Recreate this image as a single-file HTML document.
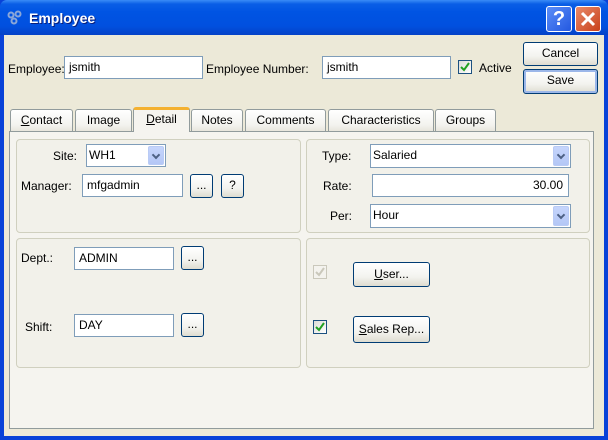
<!DOCTYPE html>
<html><head><style>
*{box-sizing:border-box;margin:0;padding:0}
body{width:608px;height:440px;overflow:hidden;font-family:"Liberation Sans",sans-serif;font-size:12px;color:#000;background:#0842d8;position:relative}
.a{position:absolute}
#title{left:0;top:0;width:608px;height:35px;background:linear-gradient(#3a8cf7 0,#0a5ee6 4px,#0054e3 12px,#0150df 26px,#0442c7 35px);border-radius:7px 7px 0 0}
#win{left:4px;top:35px;width:600px;height:401px;background:#ece9d8}
.in{position:absolute;background:#fff;border:1px solid #7f9db9;padding:2px 0 0 4px;height:23px;line-height:17px}
.btn{position:absolute;border:1px solid #003c74;border-radius:3px;background:linear-gradient(#fff,#f3f3ef 60%,#dedcd0);text-align:center;line-height:20px}
.combo{position:absolute;background:#fff;border:1px solid #7f9db9;padding:2px 0 0 2px;line-height:17px}
.combo .ar{position:absolute;right:1px;top:1px;bottom:1px;width:16px;background:linear-gradient(#c6d5fc,#b4c7f6);border-radius:2px;border:1px solid #b9cbf5}
.combo .ar:after{content:"";position:absolute;left:4px;top:5px;width:4px;height:4px;border-right:2px solid #4d6185;border-bottom:2px solid #4d6185;transform:rotate(45deg)}
.tab{position:absolute;top:109px;height:22px;border:1px solid #919b9c;border-bottom:none;border-radius:3px 3px 0 0;background:linear-gradient(#fff,#f3f3ef 70%,#e8e6dc);text-align:center;line-height:20px}
.grp{position:absolute;border:1px solid #d0d0bf;border-radius:4px;background:#f2f1ea}
.cb{position:absolute;width:14px;height:14px;border:1px solid #1c5180;background:linear-gradient(135deg,#dcdcd6,#fff)}
.lbl{position:absolute;line-height:14px}
u{text-decoration:underline}
</style></head><body>
<div id="title" class="a"></div>
<svg class="a" style="left:7px;top:10px" width="16" height="16" viewBox="0 0 16 16"><g fill="none" stroke="#8aa6d8" stroke-width="2"><circle cx="4" cy="5" r="2.5"/><circle cx="11" cy="4" r="2.5"/><circle cx="7" cy="11" r="2.5"/></g></svg>
<div class="a" style="left:29px;top:10px;color:#fff;font-weight:bold;font-size:14px;text-shadow:1px 1px 0 #0a1e7a">Employee</div>
<div class="a" style="left:546px;top:6px;width:26px;height:26px;border:1px solid #fff;border-radius:3px;background:linear-gradient(135deg,#5b8ef8,#2358e0);color:#fff;font-weight:bold;font-size:20px;text-align:center;line-height:24px">?</div>
<div class="a" style="left:575px;top:6px;width:26px;height:26px;border:1px solid #fff;border-radius:3px;background:linear-gradient(135deg,#e98a6a,#c8401a)"><svg width="24" height="24"><path d="M6 6L18 18M18 6L6 18" stroke="#fff" stroke-width="3"/></svg></div>
<div id="win" class="a"></div>

<div class="lbl" style="left:8px;top:62px">Employee:</div>
<div class="in" style="left:64px;top:56px;width:139px">jsmith</div>
<div class="lbl" style="left:206px;top:62px">Employee Number:</div>
<div class="in" style="left:322px;top:56px;width:129px">jsmith</div>
<div class="cb" style="left:458px;top:60px"><svg width="12" height="12"><path d="M2 6l3 3 5-7" stroke="#21a121" stroke-width="2" fill="none"/></svg></div>
<div class="lbl" style="left:479px;top:61px">Active</div>
<div class="btn" style="left:523px;top:42px;width:75px;height:24px">Cancel</div>
<div class="btn" style="left:523px;top:69px;width:75px;height:25px;box-shadow:inset 0 0 0 2px #9cb7e9">Save</div>

<div class="a" style="left:9px;top:131px;width:585px;height:298px;background:#f5f4ef;border:1px solid #919b9c"></div>
<div class="tab" style="left:10px;width:63px"><u>C</u>ontact</div>
<div class="tab" style="left:75px;width:57px">Image</div>
<div class="tab" style="left:191px;width:52px">Notes</div>
<div class="tab" style="left:245px;width:81px">Comments</div>
<div class="tab" style="left:328px;width:106px">Characteristics</div>
<div class="tab" style="left:435px;width:61px">Groups</div>
<div class="tab" style="left:133px;top:107px;width:57px;height:25px;background:#f5f4ef;border-top:3px solid #f4b130;z-index:2;line-height:19px"><u>D</u>etail</div>

<div class="grp" style="left:16px;top:139px;width:285px;height:94px"></div>
<div class="grp" style="left:306px;top:139px;width:284px;height:94px"></div>
<div class="grp" style="left:16px;top:238px;width:285px;height:130px"></div>
<div class="grp" style="left:306px;top:238px;width:284px;height:130px"></div>

<div class="lbl" style="left:53px;top:149px">Site:</div>
<div class="combo" style="left:86px;top:144px;width:80px;height:23px">WH1<div class="ar"></div></div>
<div class="lbl" style="left:21px;top:179px">Manager:</div>
<div class="in" style="left:82px;top:174px;width:101px">mfgadmin</div>
<div class="btn" style="left:190px;top:174px;width:23px;height:24px">...</div>
<div class="btn" style="left:221px;top:174px;width:23px;height:24px">?</div>

<div class="lbl" style="left:322px;top:149px">Type:</div>
<div class="combo" style="left:370px;top:144px;width:201px;height:24px">Salaried<div class="ar"></div></div>
<div class="lbl" style="left:323px;top:179px">Rate:</div>
<div class="in" style="left:372px;top:174px;width:197px;text-align:right;padding-right:5px">30.00</div>
<div class="lbl" style="left:330px;top:209px">Per:</div>
<div class="combo" style="left:370px;top:204px;width:201px;height:24px">Hour<div class="ar"></div></div>

<div class="lbl" style="left:21px;top:251px">Dept.:</div>
<div class="in" style="left:74px;top:247px;width:100px">ADMIN</div>
<div class="btn" style="left:181px;top:246px;width:23px;height:24px">...</div>
<div class="lbl" style="left:25px;top:320px">Shift:</div>
<div class="in" style="left:74px;top:314px;width:100px">DAY</div>
<div class="btn" style="left:181px;top:313px;width:23px;height:24px">...</div>

<div class="cb" style="left:313px;top:265px;border-color:#cac8bb;background:#f4f3ee"><svg width="12" height="12"><path d="M2 6l3 3 5-7" stroke="#cac8bb" stroke-width="2" fill="none"/></svg></div>
<div class="btn" style="left:353px;top:262px;width:77px;height:25px;line-height:22px"><u>U</u>ser...</div>
<div class="cb" style="left:313px;top:320px"><svg width="12" height="12"><path d="M2 6l3 3 5-7" stroke="#21a121" stroke-width="2" fill="none"/></svg></div>
<div class="btn" style="left:353px;top:316px;width:77px;height:27px;line-height:24px"><u>S</u>ales Rep...</div>
</body></html>
